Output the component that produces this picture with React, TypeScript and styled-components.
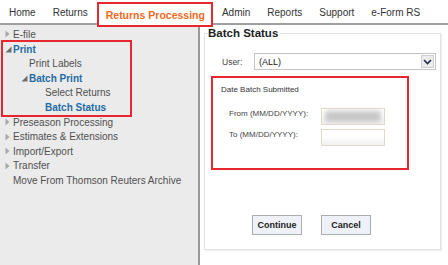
import React from "react";
import styled, { createGlobalStyle } from "styled-components";

const Global = createGlobalStyle`
  html, body { margin: 0; padding: 0; background: #ffffff; }
  body { font-family: "Liberation Sans", Arial, sans-serif; width: 448px; height: 265px; overflow: hidden; }
  * { box-sizing: border-box; }
`;

const Page = styled.div`
  width: 448px;
  height: 265px;
  display: flex;
  flex-direction: column;
`;

const Nav = styled.nav`
  height: 25px;
  display: flex;
  align-items: flex-start;
  padding-left: 9px;
  gap: 17px;
  border-bottom: 2px solid #9e9e9e;
  position: relative;
  z-index: 2;
`;

const NavItem = styled.a<{ $active?: boolean }>`
  font-size: ${(p) => (p.$active ? "10.5px" : "10px")};
  font-weight: ${(p) => (p.$active ? 700 : 400)};
  color: ${(p) => (p.$active ? "#f26a21" : "#333333")};
  text-decoration: none;
  line-height: 12px;
  margin-top: ${(p) => (p.$active ? "2px" : "7px")};
  ${(p) =>
    p.$active &&
    `
    height: 25px;
    padding: 5px 6px 0 7px;
    margin-left: -8px;
    margin-right: -8px;
    background: #ffffff;
    border: 2px solid #e8262d;
  `}
`;

const Body = styled.div`
  flex: 1;
  display: flex;
  min-height: 0;
`;

const Sidebar = styled.aside`
  width: 200px;
  flex-shrink: 0;
  background: #ebebeb;
  border-right: 2px solid #9a9a9a;
  padding-top: 2.2px;
  font-size: 10px;
`;

const Highlight = styled.div`
  width: 131px;
  margin: -2px 0 -2px 1px;
  border: 2px solid #e8262d;
`;

const Row = styled.div<{ $level: number; $inBox?: boolean; $active?: boolean }>`
  display: flex;
  align-items: center;
  height: 14.6px;
  padding-left: ${(p) => 4 + p.$level * 16 - (p.$inBox ? 3 : 0)}px;
  color: ${(p) => (p.$active ? "#246ba6" : "#505050")};
  font-weight: ${(p) => (p.$active ? 700 : 400)};
  white-space: nowrap;
`;

const IconSlot = styled.span`
  width: 9px;
  height: 10px;
  display: flex;
  align-items: center;
  padding-left: 1px;
  flex-shrink: 0;
`;

const Collapsed = () => (
  <svg width="5" height="8" viewBox="0 0 5 8">
    <path d="M0.5 0.5 L4.5 4 L0.5 7.5 Z" fill="#a8a8a8" />
  </svg>
);

const Expanded = () => (
  <svg width="7" height="7" viewBox="0 0 7 7">
    <path d="M6.5 0.5 L6.5 6.5 L0.5 6.5 Z" fill="#6e6e6e" />
  </svg>
);

type Item = { label: string; level: number; icon?: "c" | "e"; active?: boolean };

const Main = styled.main`
  flex: 1;
  min-width: 0;
  padding: 1px 7px 0 4px;
`;

const Panel = styled.fieldset`
  margin: 0;
  padding: 0 3px;
  border: 1px solid #e2e2e2;
  box-shadow: 1px 1px 2px rgba(0, 0, 0, 0.08);
  min-width: 0;
`;

const PanelBody = styled.div`
  padding-bottom: 14px;
`;

const Title = styled.legend`
  padding: 0 2px 0 0;
  font-size: 11.5px;
  font-weight: 700;
  color: #1e1e1e;
  line-height: 14px;
`;

const UserRow = styled.div`
  display: flex;
  align-items: center;
  margin-top: 13px;
  padding-left: 14px;
  padding-right: 1px;
`;

const SmallLabel = styled.span`
  font-size: 8.5px;
  color: #444444;
  width: 32px;
  flex-shrink: 0;
`;

const Select = styled.div`
  flex: 1;
  height: 17px;
  border: 1px solid #c4c4c4;
  display: flex;
  align-items: center;
  justify-content: space-between;
  padding: 0 1px 0 4px;
  font-size: 9px;
  color: #222;
`;

const Arrow = styled.span`
  width: 13px;
  height: 13px;
  background: #ececec;
  border: 1px solid #cfcfcf;
  display: flex;
  align-items: center;
  justify-content: center;
`;

const DateBox = styled.div`
  margin: 6px 0 0 3px;
  width: 198px;
  height: 94px;
  border: 2px solid #e8262d;
  padding: 7px 0 0 8px;
`;

const GroupTitle = styled.div`
  font-size: 8px;
  color: #333;
  line-height: 9px;
  margin-bottom: 14px;
`;

const DateRow = styled.div`
  display: flex;
  align-items: flex-start;
  padding-left: 8px;
  & + & { margin-top: 4px; }
`;

const DateLabel = styled.span`
  width: 92px;
  font-size: 8px;
  line-height: 12px;
  color: #444;
`;

const DateInput = styled.div`
  width: 64px;
  height: 17px;
  border: 1px solid #e2dac6;
  background: linear-gradient(#ffffff, #ffffff 45%, #f1f1f1);
  overflow: hidden;
  padding: 2px 3px;
`;

const Blur = styled.div`
  height: 100%;
  background: #c6c6c6;
  filter: blur(2.5px);
`;

const Buttons = styled.div`
  display: flex;
  gap: 19px;
  margin-top: 45px;
  padding-left: 44px;
`;

const Button = styled.button`
  width: 50px;
  height: 20px;
  font-family: inherit;
  font-size: 9px;
  font-weight: 700;
  color: #222;
  background: #eef1f7;
  border: 1px solid #adadad;
  padding: 0;
`;

const items: Item[] = [{ label: "E-file", level: 0, icon: "c" }];
const group: Item[] = [
  { label: "Print", level: 0, icon: "e", active: true },
  { label: "Print Labels", level: 1 },
  { label: "Batch Print", level: 1, icon: "e", active: true },
  { label: "Select Returns", level: 2 },
  { label: "Batch Status", level: 2, active: true },
];
const rest: Item[] = [
  { label: "Preseason Processing", level: 0, icon: "c" },
  { label: "Estimates & Extensions", level: 0, icon: "c" },
  { label: "Import/Export", level: 0, icon: "c" },
  { label: "Transfer", level: 0, icon: "c" },
  { label: "Move From Thomson Reuters Archive", level: 0 },
];

const renderRow = (it: Item, inBox = false) => (
  <Row key={it.label} $level={it.level} $inBox={inBox} $active={it.active}>
    <IconSlot>{it.icon === "c" ? <Collapsed /> : it.icon === "e" ? <Expanded /> : null}</IconSlot>
    {it.label}
  </Row>
);

export default function App() {
  return (
    <Page>
      <Global />
      <Nav>
        <NavItem>Home</NavItem>
        <NavItem>Returns</NavItem>
        <NavItem $active>Returns Processing</NavItem>
        <NavItem>Admin</NavItem>
        <NavItem>Reports</NavItem>
        <NavItem>Support</NavItem>
        <NavItem>e-Form RS</NavItem>
      </Nav>
      <Body>
        <Sidebar>
          {items.map((i) => renderRow(i))}
          <Highlight>{group.map((i) => renderRow(i, true))}</Highlight>
          {rest.map((i) => renderRow(i))}
        </Sidebar>
        <Main>
          <Panel>
            <Title>Batch Status</Title>
            <PanelBody>
              <UserRow>
                <SmallLabel>User:</SmallLabel>
                <Select>
                  (ALL)
                  <Arrow>
                    <svg width="9" height="6" viewBox="0 0 9 6">
                      <path d="M1 1 L4.5 4.5 L8 1" stroke="#1f2f4a" strokeWidth="1.6" fill="none" />
                    </svg>
                  </Arrow>
                </Select>
              </UserRow>
              <DateBox>
                <GroupTitle>Date Batch Submitted</GroupTitle>
                <DateRow>
                  <DateLabel>From (MM/DD/YYYY):</DateLabel>
                  <DateInput>
                    <Blur />
                  </DateInput>
                </DateRow>
                <DateRow>
                  <DateLabel>To (MM/DD/YYYY):</DateLabel>
                  <DateInput />
                </DateRow>
              </DateBox>
              <Buttons>
                <Button>Continue</Button>
                <Button>Cancel</Button>
              </Buttons>
            </PanelBody>
          </Panel>
        </Main>
      </Body>
    </Page>
  );
}
